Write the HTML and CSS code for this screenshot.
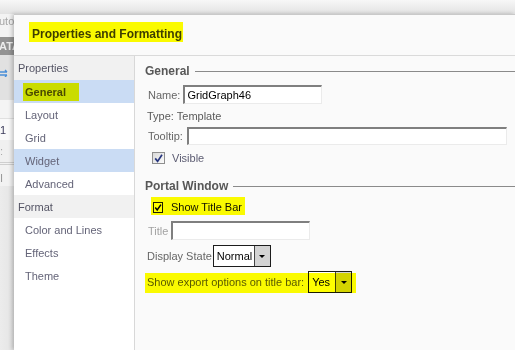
FILE: index.html
```html
<!DOCTYPE html>
<html>
<head>
<meta charset="utf-8">
<link rel="stylesheet" href="styles.css">
</head>
<body>
<div class="page">
  <div class="topbar"></div>
  <div class="row">
    <div class="strip">
      <div class="s1">uto</div>
      <div class="s2">ATA</div>
      <div class="s3"><svg width="8" height="8" viewBox="0 0 8 8"><path d="M0 3h7M0 6h7M5 1l2 2M5 8l2-2" stroke="#4a8fd8" stroke-width="1.4" fill="none"/></svg></div>
      <div class="s4"><span class="one">1</span></div>
      <div class="s5">:</div>
      <div class="s6">I</div>
      <div class="s7"></div>
    </div>
    <div class="dialog">
      <div class="dlg-head"><span class="hl hl-head">Properties and Formatting</span></div>
      <div class="dlg-body">
        <nav class="side">
          <div class="grp first">Properties</div>
          <div class="item sel"><span class="hl hl-gen">General</span></div>
          <div class="item">Layout</div>
          <div class="item">Grid</div>
          <div class="item hover">Widget</div>
          <div class="item">Advanced</div>
          <div class="grp">Format</div>
          <div class="item">Color and Lines</div>
          <div class="item">Effects</div>
          <div class="item">Theme</div>
        </nav>
        <main class="panel">
          <div class="sec">General</div>
          <div class="f r-name"><span>Name:</span><div class="inp w-name">GridGraph46</div></div>
          <div class="f r-type">Type: Template</div>
          <div class="f r-tip"><span>Tooltip:</span><div class="inp w-tip"></div></div>
          <div class="f r-vis"><span class="cb"><svg width="11" height="11" viewBox="0 0 11 11"><path d="M2.2 5.4 L4.6 8.4 L9 1.8" stroke="#27367e" stroke-width="1.7" fill="none"/></svg></span><span class="vis-txt">Visible</span></div>
          <div class="sec sec2">Portal Window</div>
          <div class="f r-stb"><span class="hl hl-stb"><span class="cb dark"><svg width="9" height="9" viewBox="0 0 9 9"><path d="M1.4 4.4 L3.6 7.2 L7.8 1.2" stroke="#000" stroke-width="1.7" fill="none"/></svg></span><span class="stb-txt">Show Title Bar</span></span></div>
          <div class="f r-title"><span class="dis">Title</span><div class="inp w-title"></div></div>
          <div class="f r-disp"><span>Display State</span><div class="selbox w-disp"><span class="sel-txt">Normal</span><span class="sel-btn"><i class="arrow"></i></span></div></div>
          <div class="f r-exp"><span class="hl hl-exp"><span class="exp-lbl">Show export options on title bar:</span><div class="selbox w-exp"><span class="sel-txt">Yes</span><span class="sel-btn"><i class="arrow"></i></span></div></span></div>
        </main>
      </div>
    </div>
  </div>
</div>
</body>
</html>
```
FILE: styles.css
```css
* { box-sizing: border-box; }
body {
  margin: 0;
  width: 515px;
  height: 350px;
  overflow: hidden;
  font: 11px "Liberation Sans", Arial, sans-serif;
  background: #e9e9e9;
}
.page { display: flex; flex-direction: column; height: 350px; }
.topbar { height: 14px; flex: none; background: linear-gradient(#f7f7f7, #e2e2e2); }
.row { display: flex; flex: 1; min-height: 0; }

.strip { width: 14px; flex: none; display: flex; flex-direction: column; overflow: hidden; background: #e9e9e9; white-space: nowrap; }
.s1 { height: 23px; background: #f3f3f3; color: #a6a6a6; line-height: 14px; text-indent: -1px; }
.s2 { height: 18px; background: #939393; color: #ededed; font-weight: bold; line-height: 18px; text-indent: -1px; }
.s3 { height: 45px; background: #e1e1e1; padding-top: 14px; }
.s3 svg { display: block; }
.s4 { height: 40px; background: #f4f4f4; padding-top: 18px; border-bottom: 1px solid #dadada; }
.one { display: block; height: 22px; line-height: 22px; color: #3a3a5a; background: #f9f9f9; border-top: 1px solid #e0e0e0; }
.s5 { height: 22px; background: #f0f0f0; color: #aaa; line-height: 22px; }
.s6 { height: 24px; background: #f2f2f2; color: #999; line-height: 26px; border-top: 3px double #cfcfcf; }
.s7 { flex: 1; background: linear-gradient(90deg, #ececec, #e4e4e4); }

.dialog {
  flex: 1;
  min-width: 0;
  display: flex;
  flex-direction: column;
  background: #fafafa;
  border-top: 1px solid #c9c9c9;
  box-shadow: -2px 0 4px rgba(0,0,0,0.22);
}
.dlg-head {
  height: 41px;
  flex: none;
  border-bottom: 1px solid #dadada;
  display: flex;
  align-items: center;
  padding: 0 0 2px 18px;
  font-weight: bold;
  font-size: 12px;
  color: #3e3e3e;
}
.hl { position: relative; }
.hl::after {
  content: "";
  position: absolute;
  background: #ffff00;
  mix-blend-mode: multiply;
  pointer-events: none;
}
.hl-head::after { left: -3px; right: -1px; top: -5px; bottom: -1px; }

.dlg-body { flex: 1; display: flex; min-height: 0; }
.side { width: 121px; flex: none; background: #fff; border-right: 1px solid #d8d8d8; }
.grp { height: 23px; display: flex; align-items: center; padding-left: 4px; background: #f1f1f1; color: #545464; }
.grp.first { height: 24px; }
.item { height: 23px; display: flex; align-items: center; padding-left: 11px; color: #646478; }
.item.sel { background: #cadcf4; font-weight: bold; color: #4a4a4a; }
.item.hover { background: #cadcf4; }
.hl-gen::after { left: -2px; right: -13px; top: -3px; bottom: -3px; }

.panel { flex: 1; min-width: 0; display: flex; flex-direction: column; padding: 8px 0 0 10px; }
.sec { display: flex; align-items: center; height: 14px; font-weight: bold; font-size: 12px; color: #575757; white-space: nowrap; }
.sec::after { content: ""; flex: 1; height: 1px; background: #8a8a8a; margin-left: 5px; }
.sec2 { margin-top: 13px; }

.f { display: flex; align-items: center; padding-left: 3px; color: #666; white-space: nowrap; flex: none; }
.inp {
  background: #fff;
  border-top: 2px solid #7f7f7f;
  border-left: 2px solid #7f7f7f;
  border-right: 1px solid #ebebeb;
  border-bottom: 1px solid #ebebeb;
  height: 19px;
  display: flex;
  align-items: center;
  padding-left: 2px;
  color: #000;
}
.r-name { height: 21px; margin-top: 6px; gap: 3px; }
.w-name { width: 139px; }
.r-type { height: 16px; margin-top: 3px; padding-left: 2px; color: #5a5a5a; }
.r-tip { height: 20px; margin-top: 2px; gap: 4px; }
.w-tip { width: 320px; height: 18px; }
.r-vis { height: 16px; margin-top: 4px; padding-left: 7px; gap: 7px; }
.cb {
  width: 13px; height: 12px;
  border: 1px solid #8e8e8e;
  background: linear-gradient(135deg, #d9d9d9, #fbfbfb);
  display: flex; align-items: center; justify-content: center;
}
.cb svg { display: block; }
.vis-txt { color: #5c5c72; }
.r-stb { height: 20px; margin-top: 4px; padding-left: 8px; }
.hl-stb { display: flex; align-items: center; height: 20px; gap: 8px; }
.hl-stb::after { left: -2px; right: -3px; top: 0; bottom: 2px; }
.cb.dark { width: 10px; height: 11px; border-color: #1e1e1e; background: #fff; }
.stb-txt { color: #111; }
.r-title { height: 21px; margin-top: 3px; gap: 3px; }
.dis { color: #a3a3a3; }
.w-title { width: 139px; }
.r-disp { height: 22px; margin-top: 4px; padding-left: 2px; gap: 1px; }
.selbox { display: flex; height: 22px; border: 1px solid #1c1c1c; background: #fff; }
.sel-txt { flex: 1; display: flex; align-items: center; padding-left: 3px; color: #000; }
.sel-btn { width: 16px; background: #d3d3d3; border-left: 1px solid #444; display: flex; align-items: center; justify-content: center; }
.arrow { display: block; width: 0; height: 0; border-left: 3px solid transparent; border-right: 3px solid transparent; border-top: 3px solid #000; }
.w-disp { width: 58px; }
.r-exp { height: 22px; margin-top: 4px; padding-left: 2px; }
.hl-exp { display: flex; align-items: center; height: 22px; gap: 4px; }
.hl-exp::after { left: -2px; right: -4px; top: 2px; bottom: 0; }
.exp-lbl { color: #5a5a5a; }
.w-exp { width: 44px; }
```
